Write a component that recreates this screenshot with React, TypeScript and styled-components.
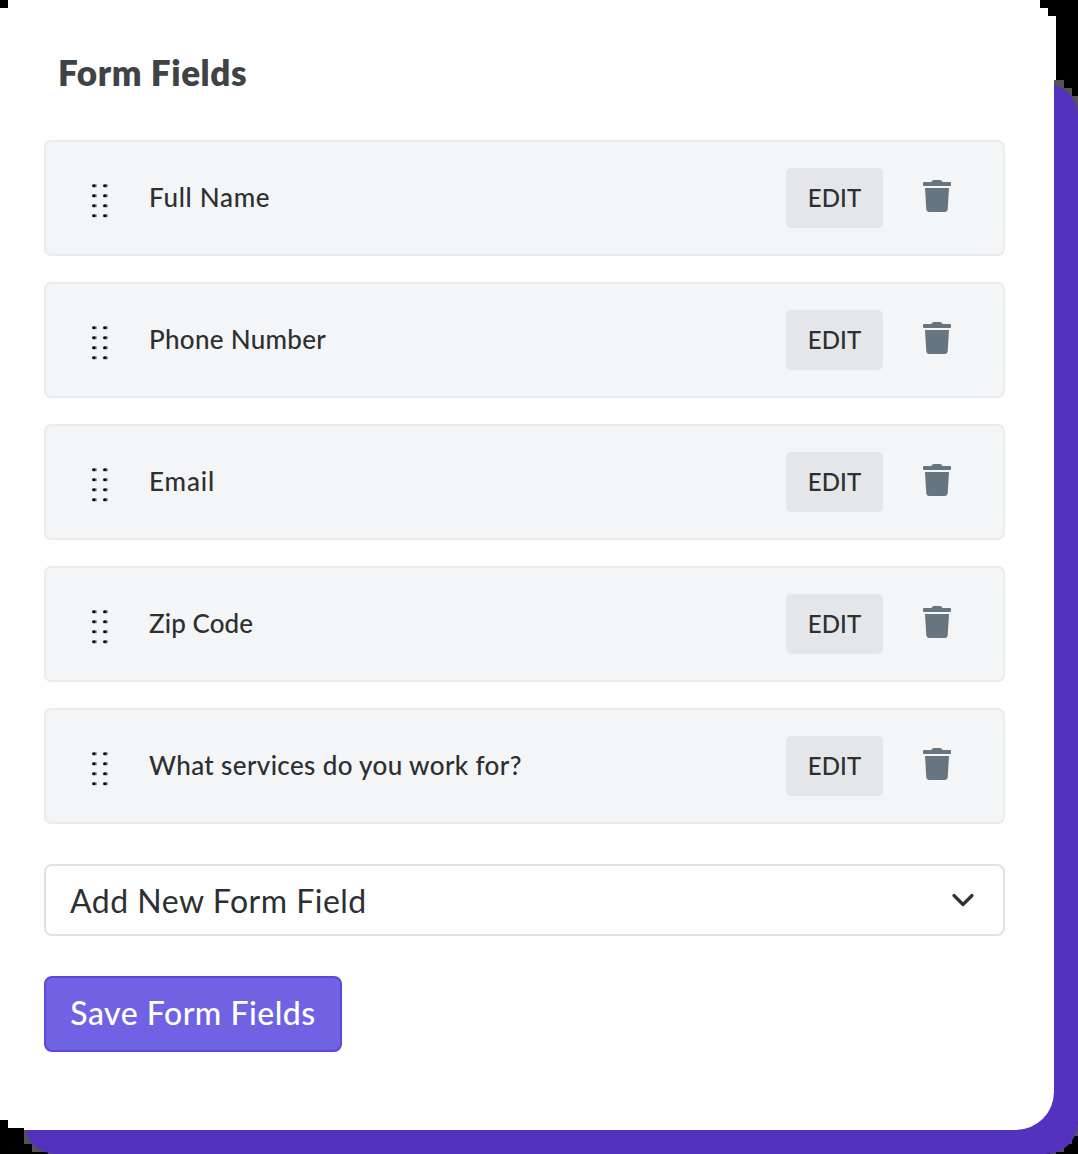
import React from "react";
import styled, { createGlobalStyle } from "styled-components";

const GlobalStyle = createGlobalStyle`
  body { margin: 0; background: #000; }
  *, *::before, *::after { box-sizing: border-box; }
`;

const Stage = styled.main`
  position: relative;
  width: 1078px;
  height: 1154px;
  overflow: hidden;
  background: #000;
  font-family: Lato, "Open Sans", sans-serif;
  color: #2d2f31;
`;

const Corners = styled.svg`
  position: absolute;
  inset: 0;
  pointer-events: none;
`;

const Shadow = styled.div`
  position: absolute;
  left: 24px;
  top: 84px;
  width: 1054px;
  height: 1070px;
  border-radius: 32px;
  background: #5532bd;
`;

const Card = styled.section`
  position: relative;
  display: flex;
  flex-direction: column;
  align-items: flex-start;
  width: 1054px;
  height: 1130px;
  padding: 46px 49px 0 44px;
  border-radius: 0 0 38px 0;
  background: #fefefe;
`;

const Title = styled.h1`
  margin: 0 0 42px 14px;
  height: 52px;
  font: 800 35px/52px Lato, sans-serif;
  letter-spacing: 0.6px;
  color: #404346;
  white-space: nowrap;
`;

const List = styled.ul`
  display: flex;
  flex-direction: column;
  gap: 26px;
  width: 100%;
  margin: 0 0 40px;
  padding: 0;
  list-style: none;
`;

const Row = styled.li`
  display: flex;
  align-items: center;
  height: 116px;
  padding: 0 52px 0 46px;
  border: 2px solid #e9ebed;
  border-radius: 7px;
  background: #f4f5f7;
`;

const Grip = styled.svg`
  flex: none;
  margin-top: 4px;
`;

const Label = styled.span<{ $spacing: number }>`
  flex: 1;
  margin: 0 0 2px 39px;
  font-size: 26px;
  font-weight: 500;
  line-height: 36px;
  letter-spacing: ${(p) => p.$spacing}px;
  white-space: nowrap;
`;

const EditButton = styled.button`
  width: 97px;
  height: 60px;
  margin-right: 40px;
  padding: 0;
  border: 0;
  border-radius: 5px;
  background: #e5e6e9;
  color: #2d2f31;
  font: 500 24px/32px Lato, sans-serif;
  letter-spacing: 0.1px;
`;

const Trash = styled.svg`
  flex: none;
  margin-top: -4px;
  fill: #66757f;
`;

const Select = styled.div`
  display: flex;
  align-items: center;
  justify-content: space-between;
  width: 100%;
  height: 72px;
  margin-bottom: 40px;
  padding: 0 28px 0 24px;
  border: 2px solid #e0e1e3;
  border-radius: 8px;
  font-size: 32px;
  letter-spacing: 0.5px;
  white-space: nowrap;
`;

const SaveButton = styled.button`
  width: 298px;
  height: 76px;
  padding: 0 0 2px;
  border: 2px solid #5c49d8;
  border-radius: 8px;
  background: #6f62e3;
  color: #fff;
  font: 500 32px/40px Lato, sans-serif;
  letter-spacing: 0.5px;
  white-space: nowrap;
`;

const fields = [
  { name: "Full Name", spacing: 0.7 },
  { name: "Phone Number", spacing: 0.3 },
  { name: "Email", spacing: 0.9 },
  { name: "Zip Code", spacing: 0.1 },
  { name: "What services do you work for?", spacing: 0.37 },
];

const GripIcon = () => (
  <Grip width="18" height="36" viewBox="0 0 18 36">
    {[0, 11].map((x) =>
      [2.5, 12.5, 22.5, 32.5].map((y) => (
        <g key={`${x}-${y}`}>
          <rect x={x + 0.2} y={y - 0.4} width="5" height="3.4" rx="1.5" fill="#a3a5a7" />
          <rect x={x + 0.2} y={y} width="3.4" height="2.6" rx="1" fill="#050505" />
        </g>
      ))
    )}
  </Grip>
);

const TrashIcon = () => (
  <Trash width="28" height="32" viewBox="0 0 28 32">
    <path d="M1 2h7.6c.4-1.2 1.2-2 2.4-2h6c1.200 0 2 .8 2.400 2H27a1 1 0 0 1 1 1v2a1 1 0 0 1-1 1H1a1 1 0 0 1-1-1V3a1 1 0 0 1 1-1Z" />
    <path d="M2 8h24l-1.300 21.500a2.700 2.700 0 0 1-2.700 2.500H6a2.700 2.700 0 0 1-2.700-2.500Z" />
  </Trash>
);

export default function App() {
  return (
    <>
      <GlobalStyle />
      <Stage>
        <Corners width="1078" height="1154" shapeRendering="crispEdges">
          <path fill="#555355" d="M1054 80h10v8h8v8h6v30h-24ZM24 1128h32v26h-8v-2H32v-8h-8ZM1050 1124h28v12h-6v8h-8v8h-8v2h-6Z" />
        </Corners>
        <Shadow />
        <Card>
          <Title>Form Fields</Title>
          <List>
            {fields.map((f) => (
              <Row key={f.name}>
                <GripIcon />
                <Label $spacing={f.spacing}>{f.name}</Label>
                <EditButton>EDIT</EditButton>
                <TrashIcon />
              </Row>
            ))}
          </List>
          <Select>
            Add New Form Field
            <svg width="24" height="16" viewBox="0 0 24 16" fill="none" stroke="#303234" strokeWidth="3.2" strokeLinecap="round" strokeLinejoin="round">
              <path d="m3 3.500 9 9 9-9" />
            </svg>
          </Select>
          <SaveButton>Save Form Fields</SaveButton>
        </Card>
        <Corners width="1078" height="1154" shapeRendering="crispEdges">
          <path fill="#000" d="M0 0h8v8H0ZM1040 0h38v16h-30V8h-8ZM0 1120h8v8h16v26H0Z" />
          <path fill="#fefefe" d="M1054 16h2v64h-2Z" />
        </Corners>
      </Stage>
    </>
  );
}
